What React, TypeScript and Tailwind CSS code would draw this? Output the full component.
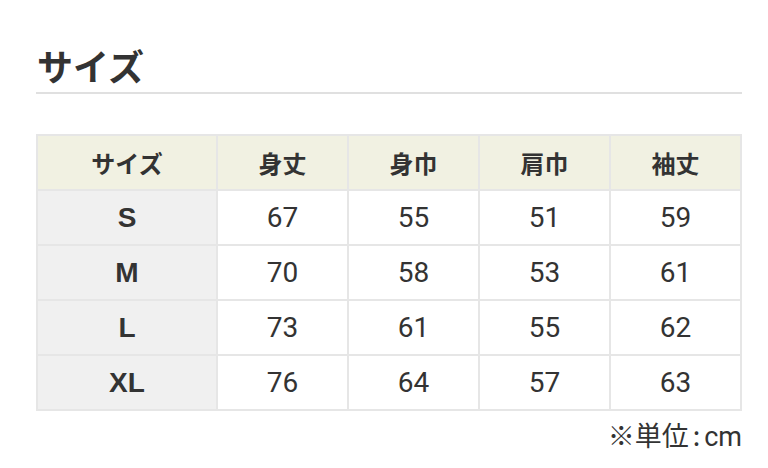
import React from 'react';

const HEADERS = ['サイズ', '身丈', '身巾', '肩巾', '袖丈'];

const ROWS = [
  { size: 'S', values: [67, 55, 51, 59] },
  { size: 'M', values: [70, 58, 53, 61] },
  { size: 'L', values: [73, 61, 55, 62] },
  { size: 'XL', values: [76, 64, 57, 63] },
];

const App: React.FC = () => {
  return (
    <div
      className="w-[768px] h-[468px] bg-white text-[#333] pl-[36px] pr-[26px] pt-[40px]"
      style={{ fontFamily: '"Noto Sans CJK JP", sans-serif' }}
    >
      <h2 className="text-[36px] font-bold leading-[50px] pl-[1px] pb-[2px] border-b-2 border-[#e0e0e0]">サイズ</h2>

      <table className="mt-[40px] w-[706px] border-collapse border-2 border-[#e6e6e6] table-fixed">
        <colgroup>
          <col className="w-[180px]" />
          <col />
          <col />
          <col />
          <col />
        </colgroup>
        <thead>
          <tr className="h-[55px] bg-[#f1f1e2]">
            {HEADERS.map((h) => (
              <th key={h} className="border-2 border-[#e6e6e6] text-[24px] font-bold text-center">
                {h}
              </th>
            ))}
          </tr>
        </thead>
        <tbody>
          {ROWS.map((row) => (
            <tr key={row.size} className="h-[55px]">
              <td
                className="border-2 border-[#e6e6e6] bg-[#f0f0f0] text-[28px] font-bold text-center"
                style={{ fontFamily: '"Liberation Sans", Arial, sans-serif' }}
              >
                {row.size}
              </td>
              {row.values.map((v, i) => (
                <td key={i} className="border-2 border-[#e6e6e6] text-[28px] text-center" style={{ fontFamily: 'Roboto, sans-serif' }}>
                  {v}
                </td>
              ))}
            </tr>
          ))}
        </tbody>
      </table>

      <p className="text-right text-[27px] leading-[48px]">
        ※単位<span className="mx-[4px]">:</span>
        <span style={{ fontFamily: 'Roboto, sans-serif' }}>cm</span>
      </p>
    </div>
  );
};

export default App;
